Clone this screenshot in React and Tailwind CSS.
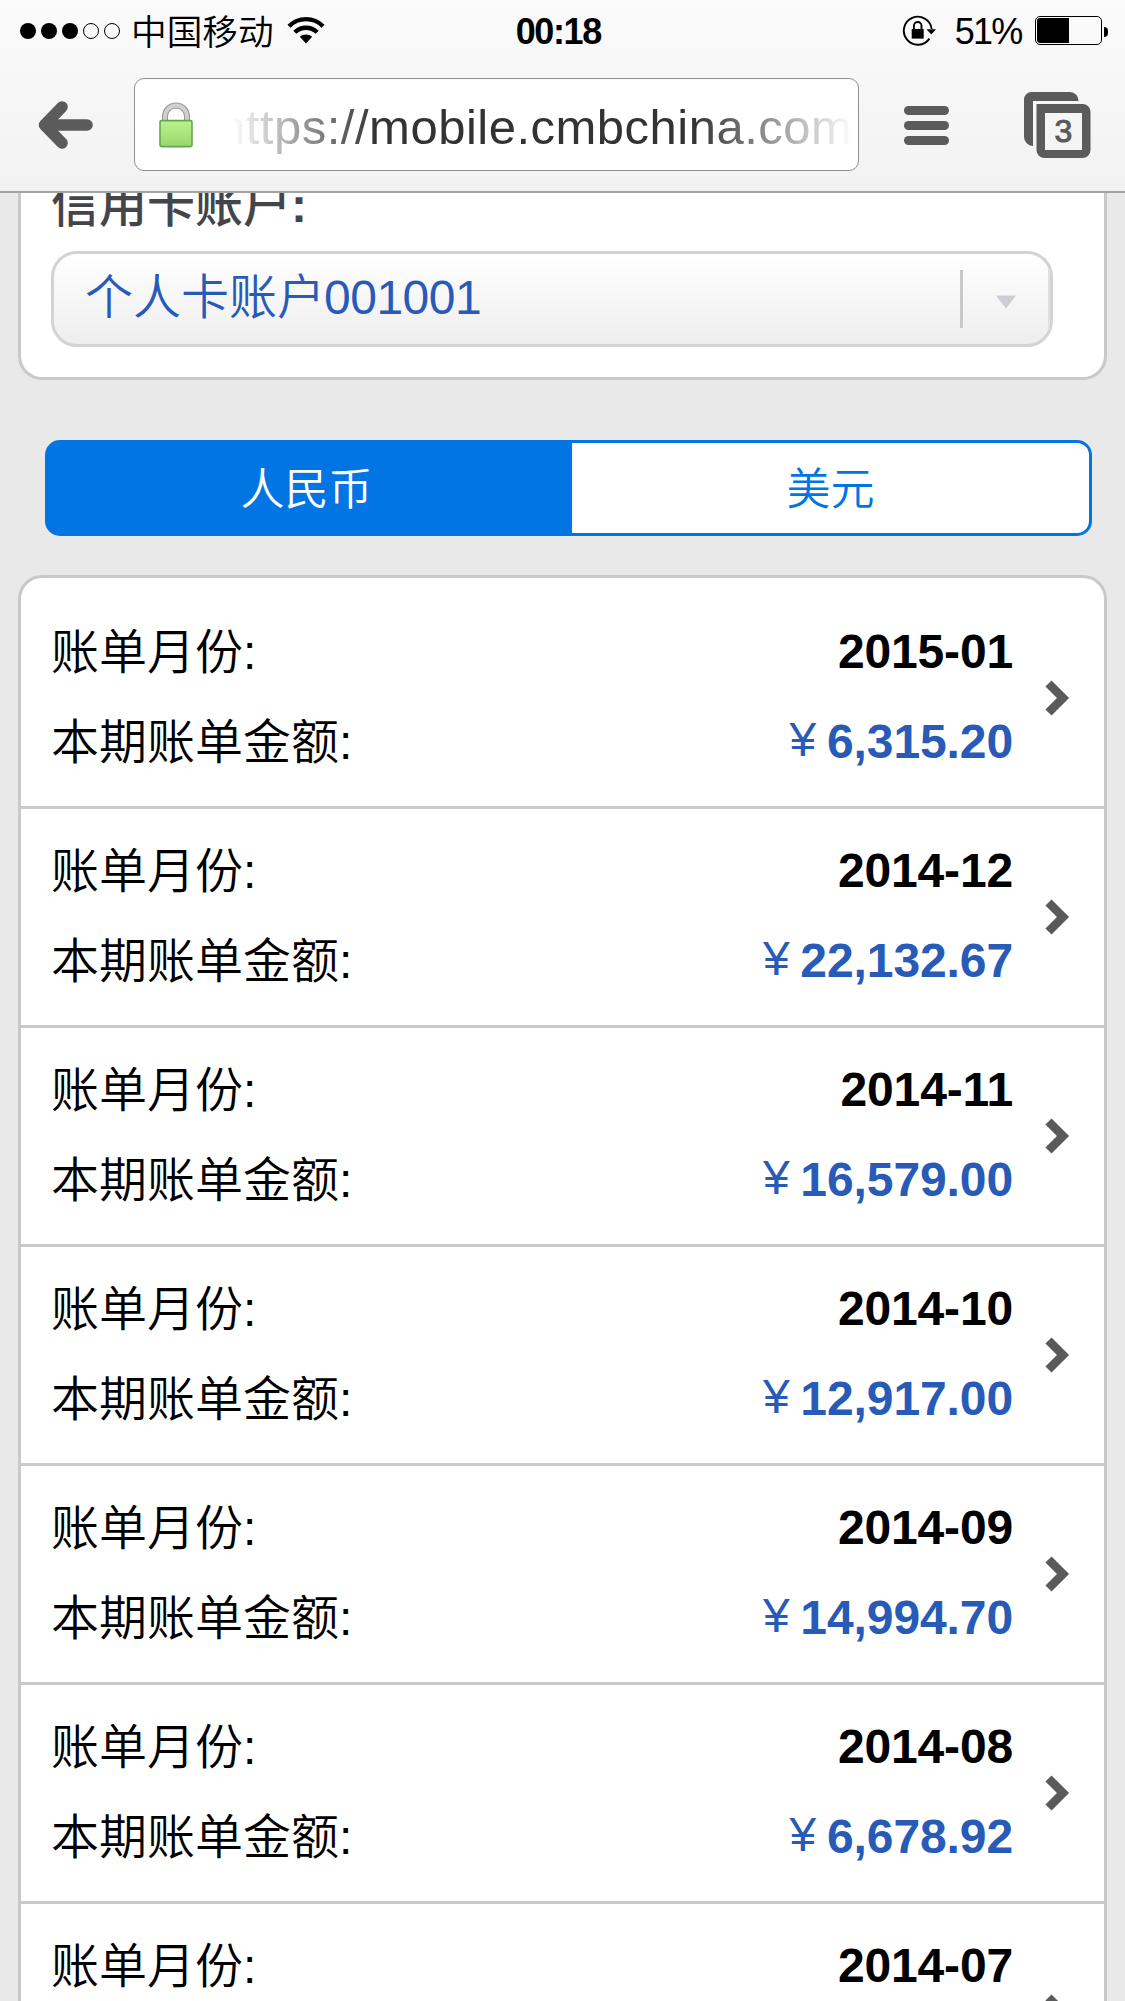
import React from "react";

const bills = [
  { month: "2015-01", amount: "6,315.20" },
  { month: "2014-12", amount: "22,132.67" },
  { month: "2014-11", amount: "16,579.00" },
  { month: "2014-10", amount: "12,917.00" },
  { month: "2014-09", amount: "14,994.70" },
  { month: "2014-08", amount: "6,678.92" },
  { month: "2014-07" },
];

function SignalDots() {
  return (
    <div className="flex gap-[5px]">
      {[1, 1, 1, 0, 0].map((on, i) => (
        <span
          key={i}
          className={
            on
              ? "size-4 rounded-full bg-black"
              : "size-4 rounded-full border border-black"
          }
        />
      ))}
    </div>
  );
}

function WifiIcon() {
  return (
    <svg width="38" height="28" viewBox="0 0 38 28" fill="none" stroke="#000" strokeWidth="4.4">
      <path d="M2 10.2A24 24 0 0 1 36 10.2" />
      <path d="M7.8 16.3A16 16 0 0 1 30.2 16.3" />
      <path d="M19 27.5L12.8 20.8A9.2 9.2 0 0 1 25.2 20.8Z" fill="#000" stroke="none" />
    </svg>
  );
}

function RotationLock() {
  return (
    <svg width="36" height="32" viewBox="0 0 36 32" fill="none" stroke="#000">
      <path d="M27.4 23.6A14 14 0 1 1 29.7 14" strokeWidth="1.9" />
      <path d="M24.5 14.2H34L29.3 19.6Z" fill="#000" stroke="none" />
      <rect x="9.7" y="14" width="12" height="9.6" fill="#000" stroke="none" />
      <path d="M11.9 14.5V10.8a3.8 3.8 0 0 1 7.6 0V14.5" strokeWidth="1.9" />
    </svg>
  );
}

function Battery() {
  return (
    <div className="flex items-center gap-[2px]">
      <div className="h-[29px] w-[67px] rounded-[5px] border border-black p-px">
        <div className="h-full w-[32px] rounded-l-[3px] bg-black" />
      </div>
      <div className="mt-[2px] h-[10px] w-1 rounded-r-full bg-black" />
    </div>
  );
}

function StatusBar() {
  return (
    <div className="flex h-[62px] items-center pl-5">
      <SignalDots />
      <span className="ml-[11px] mt-[3px] text-[35.7px] font-[350] leading-[60px]">中国移动</span>
      <div className="ml-[13px] -mt-[2px]">
        <WifiIcon />
      </div>
      <span className="ml-[191px] mt-[2px] w-[90px] text-[36px] font-bold leading-[64px] tracking-[-1.4px]">00:18</span>
      <div className="ml-[296px] -mt-[1px]">
        <RotationLock />
      </div>
      <span className="ml-[17px] mt-[2px] w-[76px] text-[36px] leading-[64px] tracking-[-1.8px]">51%</span>
      <div className="ml-[4px] -mt-[1px]">
        <Battery />
      </div>
    </div>
  );
}

function BackArrow() {
  return (
    <svg width="56" height="50" viewBox="0 0 56 50" fill="none" stroke="#5b5b5b" strokeWidth="11.6" strokeLinecap="round" strokeLinejoin="round">
      <path d="M25 7L7.500 25L25 43" />
      <path d="M9 25H50" />
    </svg>
  );
}

function Padlock() {
  return (
    <svg width="36" height="48" viewBox="0 0 36 48" fill="none">
      <defs>
        <linearGradient id="lockBody" x1="0" y1="0" x2="0" y2="1">
          <stop offset="0" stopColor="#baf48c" />
          <stop offset="1" stopColor="#98d66c" />
        </linearGradient>
      </defs>
      <path d="M7 21V14.5a11 11 0 0 1 22 0V21" stroke="#999" strokeWidth="6" />
      <path d="M7 21V14.5a11 11 0 0 1 22 0V21" stroke="#d0d0d0" strokeWidth="3.8" />
      <rect x="2" y="18.6" width="32" height="26" rx="1.5" fill="url(#lockBody)" stroke="#62a853" strokeWidth="1.6" />
    </svg>
  );
}

function MenuIcon() {
  return (
    <div className="flex w-[45px] flex-col gap-[6px]">
      <span className="h-[9px] rounded-full bg-[#5b5b5b]" />
      <span className="h-[9px] rounded-full bg-[#5b5b5b]" />
      <span className="h-[9px] rounded-full bg-[#5b5b5b]" />
    </div>
  );
}

function TabsIcon() {
  return (
    <div className="relative h-[66px] w-[67px]">
      <svg width="67" height="66" viewBox="0 0 67 66">
        <path d="M0 7.500A7.500 7.500 0 0 1 7.500 0H46A8.500 8.500 0 0 1 54.500 9H9V54A9 9 0 0 1 0 45Z" fill="#5b5b5b" />
        <path fillRule="evenodd" d="M12.500 12H58.500A8 8 0 0 1 66.500 20V58A8 8 0 0 1 58.500 66H20.500A8 8 0 0 1 12.500 58ZM21 21V58H58V21Z" fill="#5b5b5b" />
      </svg>
      <span className="absolute left-[21px] top-[21px] w-[37px] text-center text-[32px] leading-[37px] text-[#5b5b5b] [-webkit-text-stroke:1px_#5b5b5b]">3</span>
    </div>
  );
}

function Toolbar() {
  return (
    <div className="flex items-start">
      <div className="ml-[37px] mt-[38px]">
        <BackArrow />
      </div>
      <div className="ml-[41px] mt-4 flex h-[93px] w-[725px] items-center overflow-hidden rounded-[10px] border border-[#909090] bg-white">
        <div className="ml-[23px] mt-[3px]">
          <Padlock />
        </div>
        <div className="ml-[31px] mt-[4px] w-[633px] overflow-hidden whitespace-nowrap [mask-image:linear-gradient(to_right,transparent_6px,black_150px,black_470px,transparent_628px)]">
          <span className="-ml-[7px] block text-[49px] leading-[88px] tracking-[0.5px] text-[#333]">https://mobile.cmbchina.com/</span>
        </div>
      </div>
      <div className="ml-[45px] mt-[44px]">
        <MenuIcon />
      </div>
      <div className="ml-[75px] mt-[30px]">
        <TabsIcon />
      </div>
    </div>
  );
}

function AccountCard() {
  return (
    <section className="mx-[18px] h-[187px] overflow-hidden rounded-b-[24px] border-x-[3px] border-b-[3px] border-[#c9c9c9] bg-white px-[30px]">
      <h2 className="-mt-[16px] h-[74px] text-[48px] font-medium leading-[58px] text-[#444548]">
        信用卡账户<b>:</b>
      </h2>
      <div className="flex h-[96px] w-[1002px] items-center rounded-[26px] border-[3px] border-[#d3d3d3] bg-gradient-to-b from-white to-[#eeeeee]">
        <span className="-mt-[2px] ml-[31px] flex-1 text-[48px] font-[350] leading-[90px] text-[#285bb7]">
          个人卡账户<span className="-ml-px font-normal tracking-[-0.5px]">001001</span>
        </span>
        <span className="h-[58px] w-[3px] bg-[#c9c9c9]" />
        <svg className="ml-8 mt-[6px]" width="22" height="14" viewBox="0 0 22 14">
          <path d="M1 0.500H21L11 13.500Z" fill="#cbced3" />
        </svg>
        <span className="ml-[31px] h-[62px] w-[2px] bg-[#e0e0e0]" />
      </div>
    </section>
  );
}

function CurrencyTabs() {
  return (
    <div className="ml-[45px] mt-[60px] flex h-[96px] w-[1047px] rounded-[15px] bg-[#0075e3] p-[3px] text-[44px] font-[350] leading-[94px]">
      <div className="w-[524px] pr-[7px] text-center text-white">人民币</div>
      <div className="flex-1 rounded-r-[12px] bg-white text-center text-[#0075e3]">美元</div>
    </div>
  );
}

function Chevron() {
  return (
    <svg className="ml-[30px] mt-[1px]" width="28" height="42" viewBox="0 0 28 42" fill="none">
      <path d="M5.500 6.500L20 21L5.500 35.500" stroke="#5a5a5a" strokeWidth="8.600" />
    </svg>
  );
}

function BillRow({ month, amount }) {
  return (
    <div className="flex h-[219px] items-center border-b-[3px] border-[#c9c9c9] pb-[2px] pl-[30px] text-[48px] leading-[90px]">
      <div className="w-[962px]">
        <div className="flex justify-between">
          <span className="pt-px font-[350]">
            账单月份<span className="font-normal">:</span>
          </span>
          <b className="tracking-[-0.15px]">{month}</b>
        </div>
        <div className="-mt-px flex justify-between">
          <span className="pt-px font-[350]">
            本期账单金额<span className="font-normal">:</span>
          </span>
          {amount && (
            <span className="flex text-[#285bb7]">
              <span className="-mt-[2px] w-12 text-center">¥</span>
              <b className="tracking-[-0.1px]">{amount}</b>
            </span>
          )}
        </div>
      </div>
      <Chevron />
    </div>
  );
}

export default function App() {
  return (
    <div className="h-[2001px] w-[1125px] overflow-hidden bg-[#e9e9e9] font-['Liberation_Sans','Noto_Sans_CJK_SC',sans-serif] text-black">
      <header className="h-[193px] border-b-2 border-[#a4a4a4] bg-gradient-to-b from-[#fbfbfb] to-[#f2f2f2]">
        <StatusBar />
        <Toolbar />
      </header>
      <AccountCard />
      <CurrencyTabs />
      <section className="mx-[18px] mt-[39px] rounded-t-[24px] border-[3px] border-[#c9c9c9] bg-white pt-3">
        {bills.map((bill) => (
          <BillRow key={bill.month} {...bill} />
        ))}
      </section>
    </div>
  );
}
